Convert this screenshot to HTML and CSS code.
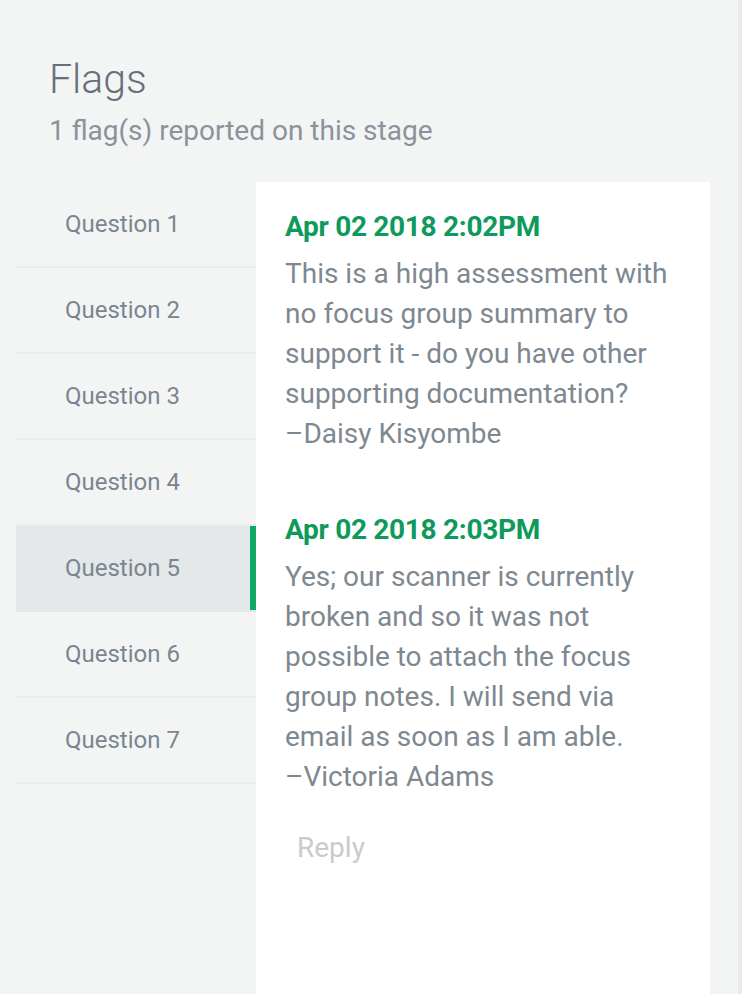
FILE: index.html
```html
<!DOCTYPE html>
<html>
<head>
<meta charset="utf-8">
<link rel="stylesheet" href="styles.css">
</head>
<body>
<div class="page">
  <header class="head">
    <h1 class="title">Flags</h1>
    <p class="subtitle">1 flag(s) reported on this stage</p>
  </header>
  <div class="content">
    <ul class="questions">
      <li class="q">Question 1</li>
      <li class="q">Question 2</li>
      <li class="q">Question 3</li>
      <li class="q">Question 4</li>
      <li class="q active">Question 5</li>
      <li class="q">Question 6</li>
      <li class="q">Question 7</li>
    </ul>
    <section class="panel">
      <div class="comment">
        <div class="date">Apr 02 2018 2:02PM</div>
        <p class="text">This is a high assessment with no focus group summary to support it - do you have other supporting documentation?<br>–Daisy Kisyombe</p>
      </div>
      <div class="comment">
        <div class="date">Apr 02 2018 2:03PM</div>
        <p class="text">Yes; our scanner is currently broken and so it was not possible to attach the focus group notes. I will send via email as soon as I am able.<br>–Victoria Adams</p>
      </div>
      <div class="reply">Reply</div>
    </section>
  </div>
</div>
</body>
</html>
```
FILE: styles.css
```css
html, body {
  margin: 0;
  padding: 0;
  height: 100%;
}
body {
  background: #f3f5f5;
  font-family: Roboto, "Liberation Sans", sans-serif;
  overflow: hidden;
}
.page {
  height: 994px;
  border-right: 4px solid #e6ebeb;
  box-sizing: border-box;
  display: flex;
  flex-direction: column;
}
.head {
  padding: 55px 0 0 49px;
  height: 182px;
  box-sizing: border-box;
}
.title {
  margin: 0;
  font-size: 41px;
  font-weight: 300;
  color: #66707a;
  line-height: 48px;
}
.subtitle {
  margin: 12px 0 0;
  font-size: 28px;
  font-weight: 400;
  color: #8a939b;
  line-height: 32px;
}
.content {
  display: flex;
  flex: 1;
  padding-left: 16px;
}
.questions {
  list-style: none;
  margin: 0;
  padding: 0;
  width: 240px;
  flex: none;
}
.q {
  height: 86px;
  box-sizing: border-box;
  border-bottom: 2px solid #e8eded;
  padding-left: 49px;
  display: flex;
  align-items: center;
  font-size: 24px;
  color: #7b8590;
}
.q.active {
  background: #e4e8e8;
  border-bottom-color: transparent;
  box-shadow: inset -6px 0 0 #0fa865;
}
.panel {
  background: #fff;
  width: 454px;
  flex: none;
  padding: 28px 25px 0 29px;
  box-sizing: border-box;
}
.comment {
  margin-bottom: 59px;
}
.comment + .comment {
  margin-bottom: 31px;
}
.date {
  font-size: 28px;
  font-weight: 700;
  color: #0d9a5b;
  letter-spacing: -0.3px;
  line-height: 34px;
}
.text {
  margin: 10px 0 0;
  font-size: 28px;
  line-height: 40px;
  color: #7e8890;
}
.reply {
  padding-left: 12px;
  font-size: 28px;
  color: #c9cbcc;
  line-height: 40px;
}
```
